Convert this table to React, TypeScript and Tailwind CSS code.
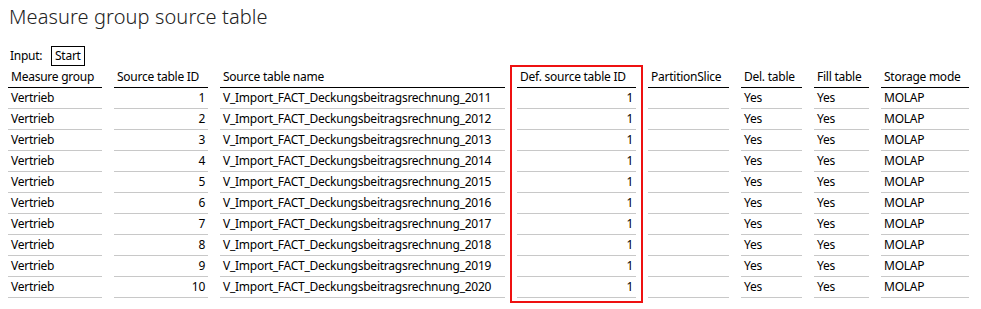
const columns = [
  { label: "Measure group", width: "w-[94px]", align: "text-left" },
  { label: "Source table ID", width: "w-[94px]", align: "text-right" },
  { label: "Source table name", width: "w-[285px]", align: "text-left" },
  { label: "Def. source table ID", width: "w-[119px]", align: "text-right" },
  { label: "PartitionSlice", width: "w-[81px]", align: "text-left" },
  { label: "Del. table", width: "w-[61px]", align: "text-left" },
  { label: "Fill table", width: "w-[55px]", align: "text-left" },
  { label: "Storage mode", width: "w-[88px]", align: "text-left" },
];

const rows = Array.from({ length: 10 }, (_, i) => [
  "Vertrieb",
  String(i + 1),
  `V_Import_FACT_Deckungsbeitragsrechnung_${2011 + i}`,
  "1",
  "",
  "Yes",
  "Yes",
  "MOLAP",
]);

export default function App() {
  return (
    <div
      className="relative w-[981px] h-[309px] bg-white text-black px-2 overflow-hidden"
      style={{ fontFamily: '"Segoe UI", "Noto Sans", "Open Sans", sans-serif' }}
    >
      <h1 className="text-[20px] leading-[24px] font-light pt-[5px] pl-[1px] text-[#222] tracking-[0.1px]">
        Measure group source table
      </h1>

      {/* Input line */}
      <div className="flex items-start h-[21px] mt-[17px] text-[12px] tracking-[-0.25px] pl-[2px]">
        <span className="w-[41px] leading-[20px]">Input:</span>
        <span className="border border-black h-[20px] px-[3px] leading-[18px]">Start</span>
      </div>

      {/* Header */}
      <div className="flex gap-3 text-[12px] tracking-[-0.25px]">
        {columns.map((c) => (
          <div
            key={c.label}
            className={`${c.width} h-[21px] border-b border-black px-[3px] leading-[20px] text-left whitespace-nowrap`}
          >
            {c.label}
          </div>
        ))}
      </div>

      {rows.map((r, ri) => (
        <div key={ri} className="flex gap-3 text-[12px] tracking-[-0.25px]">
          {r.map((v, ci) => (
            <div
              key={ci}
              className={`${columns[ci].width} ${columns[ci].align} h-[21px] border-b border-[#c8c8c8] px-[3px] leading-[20px] whitespace-nowrap`}
            >
              {v}
            </div>
          ))}
        </div>
      ))}

      {/* highlight */}
      <div className="absolute left-[510px] top-[65px] w-[133px] h-[238px] border-2 border-[#ee1111] pointer-events-none" />
    </div>
  );
}
